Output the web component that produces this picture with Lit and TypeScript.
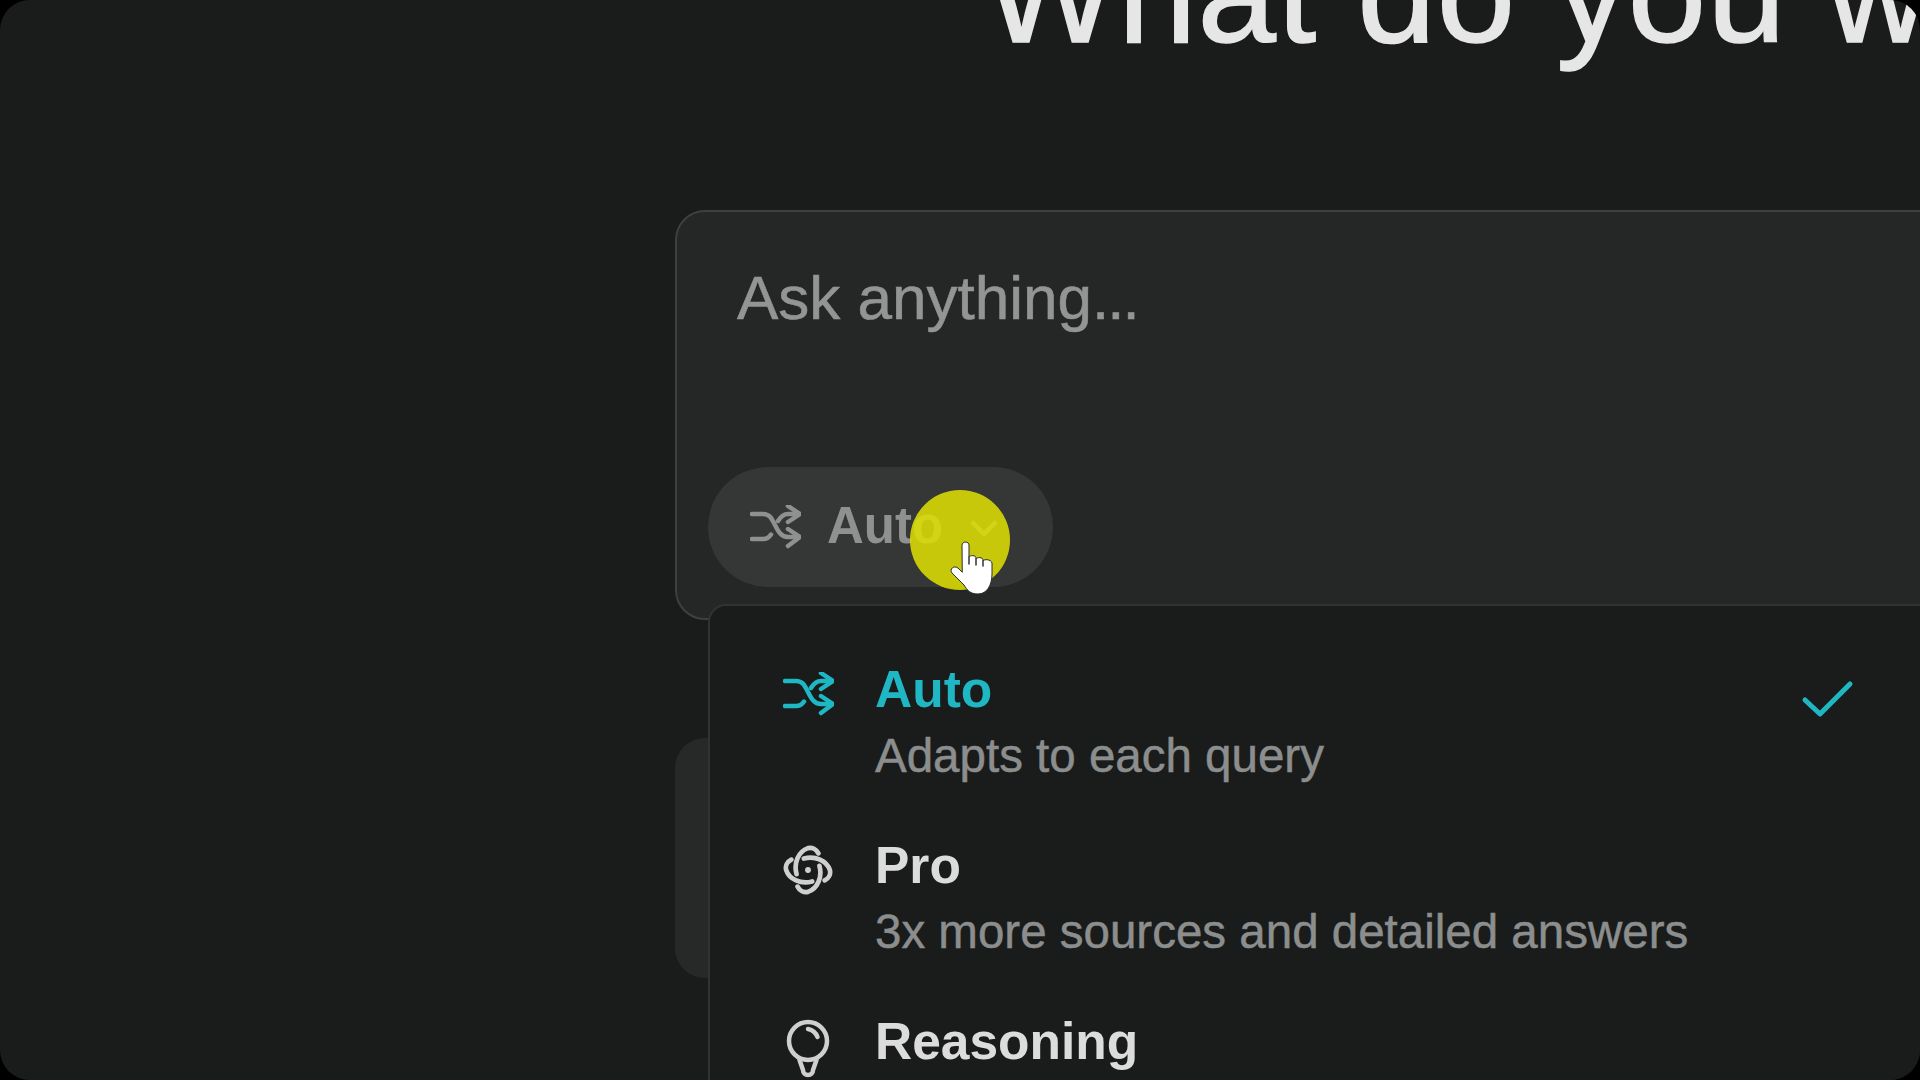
import { LitElement, html, css, svg } from "lit";
import { customElement } from "lit/decorators.js";

const shuffle = svg`<path d="M2 9h11c7 0 9 5 12 11s6 12 13 12h11"/><path d="M2 34h11c3.500 0 6-1.500 8-4.500"/><path d="M28 16c2.500-4 5-7 10-7h11"/><path d="M38 1l12 8-12 8"/><path d="M38 24l12 8-12 9"/>`;

const arm = "M13 28C10 17 15 6 24 3c4-1 8 1 10 5";
const swirl = svg`<circle cx="24" cy="24" r="2.800" fill="currentColor" stroke="none"/>
<path d=${arm}/><path d=${arm} transform="rotate(90 24 24)"/><path d=${arm} transform="rotate(180 24 24)"/><path d=${arm} transform="rotate(270 24 24)"/>`;

const bulb = svg`<circle cx="22" cy="23" r="19"/><path d="M22 11c4 .8 8 4 9.500 8"/><path d="M13.500 42l3.500 10a5 5 0 0 0 10 0l3.500-10"/>`;

@customElement("app-root")
export class AppRoot extends LitElement {
  static styles = css`
    :host { display: block; width: 1920px; height: 1080px; background: #000; font-family: "Liberation Sans", Arial, sans-serif; }
    .frame { position: relative; width: 1920px; height: 1080px; border-radius: 30px; overflow: hidden; background: #1a1c1c; }
    .page { display: flex; flex-direction: column; padding-left: 675px; }
    h1 { margin: -87px 0 0 309px; font-size: 141px; line-height: 160px; font-weight: 400; color: #e6e6e6; white-space: nowrap; letter-spacing: 1px; -webkit-text-stroke: 1.500px #e6e6e6; }
    .box { margin-top: 137px; box-sizing: border-box; width: 1400px; height: 410px; border: 2px solid #3d4040; border-radius: 30px; background: #252727; padding: 48px 0 0 60px; display: flex; flex-direction: column; }
    .ph { font-size: 62px; line-height: 76px; color: #939595; white-space: nowrap; -webkit-text-stroke: .6px #939595; }
    .dots { letter-spacing: -2px; }
    .pill { margin: 131px 0 0 -29px; width: 345px; height: 120px; flex: none; box-sizing: border-box; border-radius: 60px; background: #353737; display: flex; align-items: center; padding-left: 42px; gap: 26px; color: #8f9191; font-size: 51px; font-weight: 700; }
    .pill span { margin-top: -4px; }
    .sh { width: 51px; height: 44px; }
    .chev { width: 30px; height: 20px; margin-top: 4px; }
    svg { fill: none; stroke: currentColor; stroke-width: 4.500; stroke-linecap: round; stroke-linejoin: round; flex: none; }
    .under { margin-top: 118px; width: 100px; height: 240px; border-radius: 30px 0 0 30px; background: #272929; }
    .menu { position: absolute; left: 708px; top: 604px; width: 1300px; height: 500px; box-sizing: border-box; border: 2px solid #303333; border-right: 0; border-bottom: 0; border-radius: 18px 0 0 0; background: #1a1c1c; padding: 54px 70px 0 70px; display: flex; flex-direction: column; gap: 52px; }
    .item { display: flex; gap: 39px; color: #cfcfcf; width: 1077px; }
    .ic { width: 56px; display: flex; justify-content: center; align-items: flex-start; }
    .i1 { margin-top: 12px; width: 51px; height: 44px; }
    .i2 { margin-top: 9px; width: 50px; height: 50px; }
    .i3 { margin-top: 6px; width: 44px; height: 60px; }
    .txt { flex: 1; display: flex; flex-direction: column; gap: 10px; }
    .t { font-size: 51.500px; line-height: 58px; font-weight: 700; color: #dcdcdc; }
    .d { font-size: 47.500px; line-height: 56px; color: #8c8e8e; white-space: nowrap; -webkit-text-stroke: .5px #8c8e8e; }
    .on { color: #1fb7c4; }
    .on .t { color: #1fb7c4; }
    .check { width: 56px; height: 38px; margin-top: 20px; stroke-width: 5; }
    .dot { position: absolute; left: 910px; top: 490px; width: 100px; height: 100px; border-radius: 50%; background: rgba(222, 222, 3, .87); }
    .hand { position: absolute; left: 950px; top: 541px; width: 44px; height: 58px; stroke: #2a2a2a; stroke-width: 1; }
  `;

  render() {
    return html`<div class="frame">
      <div class="page">
        <h1>What do you want to know?</h1>
        <div class="box">
          <div class="ph">Ask anything<span class="dots">...</span></div>
          <div class="pill">
            <svg class="sh" viewBox="0 0 51 44">${shuffle}</svg>
            <span>Auto</span>
            <svg class="chev" viewBox="0 0 30 20"><path d="M4 4l11 11 11-11" /></svg>
          </div>
        </div>
        <div class="under"></div>
      </div>
      <div class="menu">
        <div class="item on">
          <div class="ic"><svg class="i1" viewBox="0 0 51 44">${shuffle}</svg></div>
          <div class="txt"><div class="t">Auto</div><div class="d">Adapts to each query</div></div>
          <svg class="check" viewBox="0 0 56 38"><path d="M4 20l15 14L49 4" /></svg>
        </div>
        <div class="item">
          <div class="ic"><svg class="i2" viewBox="0 0 48 48">${swirl}</svg></div>
          <div class="txt"><div class="t">Pro</div><div class="d">3x more sources and detailed answers</div></div>
        </div>
        <div class="item">
          <div class="ic"><svg class="i3" viewBox="0 0 44 60">${bulb}</svg></div>
          <div class="txt"><div class="t">Reasoning</div><div class="d">Advanced problem solving</div></div>
        </div>
      </div>
      <div class="dot"></div>
      <svg class="hand" viewBox="0 0 44 58"><path fill="#fff" d="M12 4c0-4 7-4 7 0v12c1-2 7-2 7 1v1c1-2 7-2 7 1v1c1-2 8-2 9 2v11c0 11-5 20-14 20-8 0-11-4-14-9L2 32c-3-4 2-8 6-5l4 4z"/><path d="M19 16v7M26 18v6M33 20v5" stroke="#333" stroke-width="1.500"/></svg>
    </div>`;
  }
}
